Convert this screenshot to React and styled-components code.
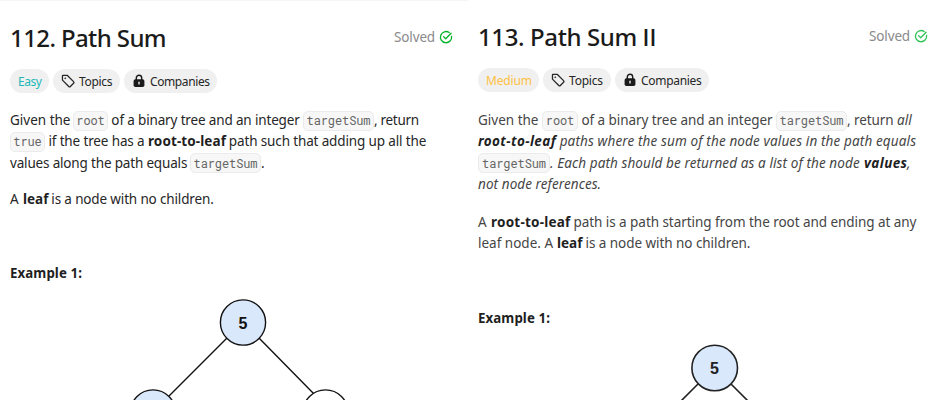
import React from 'react';
import styled, { createGlobalStyle } from 'styled-components';

const Global = createGlobalStyle`
  * { box-sizing: border-box; }
  body { margin: 0; background: #fff; overflow: hidden; }
`;

const Page = styled.main`
  display: flex;
  width: 941px;
  height: 400px;
  overflow: hidden;
  background: #fff;
  color: #262626;
  font-family: 'Noto Sans', 'Open Sans', sans-serif;
`;

const Panel = styled.article`
  width: ${(p) => p.$width}px;
  flex: none;
  padding: 0 0 0 10px;
  border-top: 1px solid ${(p) => (p.$edge ? '#f5f5f5' : '#fff')};
  color: ${(p) => p.$ink};
`;

const Header = styled.header`
  display: flex;
  justify-content: space-between;
  height: ${(p) => p.$height}px;
  padding: ${(p) => p.$top}px ${(p) => p.$right}px 0 0;
`;

const Title = styled.h1`
  margin: 0;
  font-size: 24px;
  font-weight: 500;
  line-height: 32px;
  letter-spacing: ${(p) => p.$spacing}px;
  color: #1a1a1a;
  white-space: nowrap;
`;

const Numeral = styled.span`
  font-family: Inter, Roboto, sans-serif;
  font-size: 23.5px;
  letter-spacing: 0.6px;
`;

const Status = styled.div`
  display: flex;
  align-items: center;
  gap: 4px;
  height: 30px;
  font-size: 13.5px;
  letter-spacing: -0.15px;
  color: #8a8a8a;
`;

const Tags = styled.div`
  display: flex;
  gap: 4px;
  height: 24px;
`;

const Tag = styled.span`
  display: flex;
  align-items: center;
  gap: 4px;
  width: ${(p) => p.$width}px;
  padding-left: 8px;
  border-radius: 12px;
  background: #f0f0f0;
  color: ${(p) => p.$color || '#262626'};
  font-size: 12px;
  letter-spacing: ${(p) => p.$spacing || 0}px;
  white-space: nowrap;
`;

const Paragraph = styled.p`
  margin: ${(p) => p.$top}px 0 0;
  font-size: 13.5px;
  line-height: 21.3px;
`;

const Line = styled.span`
  display: flex;
  align-items: center;
  height: 21.3px;
  white-space: pre;
`;

const Run = styled.span`
  width: ${(p) => p.$width}px;
  flex: none;
  letter-spacing: ${(p) => p.$spacing || 0}px;
  font-style: ${(p) => (p.$italic ? 'italic' : 'normal')};
  font-weight: ${(p) => (p.$bold ? 700 : 400)};
  color: ${(p) => (p.$bold ? '#1f1f1f' : 'inherit')};
`;

const Code = styled.code`
  display: flex;
  align-items: center;
  justify-content: center;
  flex: none;
  width: ${(p) => p.$width}px;
  height: 20px;
  border: 1px solid #ebebeb;
  border-radius: 5px;
  background: #f7f7f7;
  color: #666;
  font-family: 'Roboto Mono', 'DejaVu Sans Mono', monospace;
  font-size: 12px;
  letter-spacing: -0.1px;
`;

const Example = styled.h2`
  margin: ${(p) => p.$top}px 0 0;
  font-size: 13.3px;
  font-weight: 700;
  line-height: 20px;
  letter-spacing: 0.08px;
  color: #1f1f1f;
`;

const Tree = styled.svg`
  display: block;
  font-family: 'Liberation Sans', Arial, sans-serif;
`;

const TagIcon = () => (
  <svg width="14" height="14" viewBox="0 0 24 24" fill="none" stroke="#262626" strokeWidth="2.2" strokeLinejoin="round">
    <path d="M2.5 3.5v7l10.8 10.8a2 2 0 0 0 2.8 0l5.4-5.4a2 2 0 0 0 0-2.8L11 2.5H3.5a1 1 0 0 0-1 1z" />
    <circle cx="7.3" cy="7.3" r="1" fill="#262626" strokeWidth="1" />
  </svg>
);

const LockIcon = () => (
  <svg width="14" height="14" viewBox="0 0 14 14">
    <path d="M4.3 6V4a2.7 2.7 0 0 1 5.4 0v2" fill="none" stroke="#1a1a1a" strokeWidth="1.4" />
    <rect x="1.6" y="5.2" width="10.8" height="7.8" rx="1.8" fill="#1a1a1a" />
    <path d="M7 8.2v1.8" stroke="#f0f0f0" strokeWidth="1.3" strokeLinecap="round" />
  </svg>
);

const SolvedIcon = ({ color }) => (
  <svg width="14" height="14" viewBox="0 0 14 14" fill="none" stroke={color} strokeWidth="1.3" strokeLinecap="round" strokeLinejoin="round">
    <path d="M12.6 6.4A5.6 5.6 0 1 1 10.2 2.5" />
    <path d="M4.6 6.6l2.1 2.1 5.4-5.5" />
  </svg>
);

export default function App() {
  return (
    <>
      <Global />
      <Page>
        <Panel $width={468} $edge $ink="#262626">
          <Header $height={68} $top={21} $right={15}>
            <Title $spacing={-0.6}>112. Path Sum</Title>
            <Status>Solved <SolvedIcon color="#02b128" /></Status>
          </Header>
          <Tags>
            <Tag $width={39} $spacing={-0.5} $color="#1cb8b8">Easy</Tag>
            <Tag $width={67} $spacing={-0.3}><TagIcon />Topics</Tag>
            <Tag $width={93} $spacing={-0.4}><LockIcon />Companies</Tag>
          </Tags>
          <Paragraph $top={17}>
            <Line><Run $width={63}>Given the </Run><Code $width={35}>root</Code><Run $width={195} $spacing={-0.15}> of a binary tree and an integer </Run><Code $width={71}>targetSum</Code><Run $spacing={-0.3}>, return</Run></Line>
            <Line><Code $width={35}>true</Code><Run $width={103} $spacing={-0.13}> if the tree has a </Run><Run $bold $width={77.5} $spacing={0.1}>root-to-leaf</Run><Run $spacing={-0.14}> path such that adding up all the</Run></Line>
            <Line><Run $width={180} $spacing={-0.17}>values along the path equals </Run><Code $width={71}>targetSum</Code><Run>.</Run></Line>
          </Paragraph>
          <Paragraph $top={15}>
            <Line><Run $width={13}>A </Run><Run $bold $width={25}>leaf</Run><Run $spacing={-0.15}> is a node with no children.</Run></Line>
          </Paragraph>
          <Example $top={53}>Example 1:</Example>
          <Tree width="440" height="117" viewBox="10 283 440 117">
            <g fill="none" stroke="#111" strokeWidth="1.4">
              <path d="M227 338L169 396M259 338L314 394" />
              <circle cx="243" cy="322.5" r="22.6" fill="#dae8fc" />
              <circle cx="153" cy="412.5" r="22.6" fill="#dae8fc" />
              <circle cx="325.5" cy="412.5" r="22.6" fill="#fff" />
            </g>
            <text x="243" y="328.5" textAnchor="middle" fontSize="16" fontWeight="700" fill="#111">5</text>
          </Tree>
        </Panel>
        <Panel $width={473} $ink="#454545">
          <Header $height={67} $top={20} $right={13}>
            <Title $spacing={-0.38}>113. Path Sum <Numeral>II</Numeral></Title>
            <Status>Solved <SolvedIcon color="#2fc355" /></Status>
          </Header>
          <Tags>
            <Tag $width={61} $spacing={-0.15} $color="#ffc043">Medium</Tag>
            <Tag $width={68} $spacing={-0.2}><TagIcon />Topics</Tag>
            <Tag $width={94} $spacing={-0.3}><LockIcon />Companies</Tag>
          </Tags>
          <Paragraph $top={18}>
            <Line><Run $width={64}>Given the </Run><Code $width={36}>root</Code><Run $width={198} $spacing={-0.06}> of a binary tree and an integer </Run><Code $width={71}>targetSum</Code><Run $width={50} $spacing={-0.1}>, return </Run><Run $italic>all</Run></Line>
            <Line><Run $bold $italic $width={78} $spacing={0.38}>root-to-leaf</Run><Run $italic $spacing={0.13}> paths where the sum of the node values in the path equals</Run></Line>
            <Line><Code $width={72}>targetSum</Code><Run $italic $width={314} $spacing={0.1}>. Each path should be returned as a list of the node </Run><Run $bold $italic $width={43} $spacing={0.4}>values</Run><Run $italic>,</Run></Line>
            <Line><Run $italic $spacing={0.08}>not node references.</Run></Line>
          </Paragraph>
          <Paragraph $top={17}>
            <Line><Run $width={13}>A </Run><Run $bold $width={79} $spacing={0.22}>root-to-leaf</Run><Run $spacing={-0.05}> path is a path starting from the root and ending at any</Run></Line>
            <Line><Run $width={79}>leaf node. A </Run><Run $bold $width={25}>leaf</Run><Run $spacing={-0.05}> is a node with no children.</Run></Line>
          </Paragraph>
          <Example $top={53}>Example 1:</Example>
          <Tree width="450" height="72" viewBox="478 328 450 72">
            <g fill="none" stroke="#222" strokeWidth="1.6">
              <path d="M698 384L670 412M731 384L760 413" />
              <circle cx="714.7" cy="368" r="22.8" fill="#dae8fc" />
            </g>
            <text x="714.5" y="374" textAnchor="middle" fontSize="16" fontWeight="700" fill="#222">5</text>
          </Tree>
        </Panel>
      </Page>
    </>
  );
}
